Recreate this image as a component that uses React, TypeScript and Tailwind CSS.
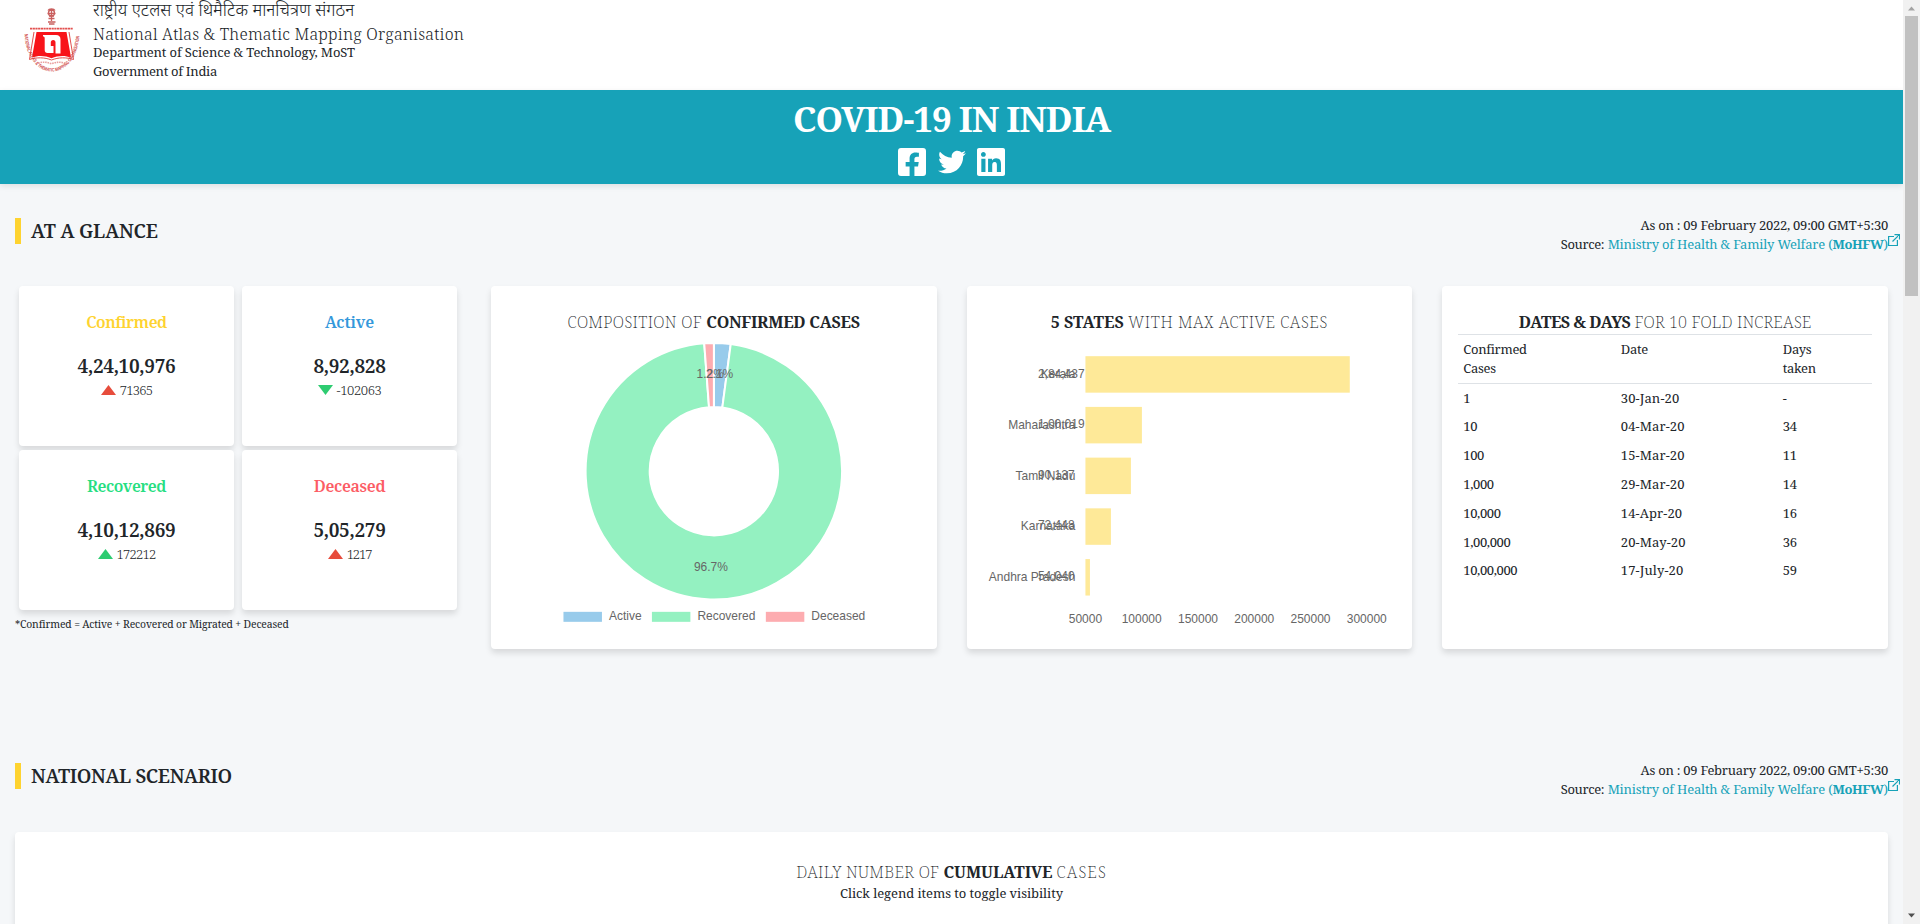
import type { ReactNode } from "react";
import { FaFacebookSquare, FaLinkedin, FaTwitter } from "react-icons/fa";

const YELLOW = "#fee998";
const BLUE = "#98cbeb";
const GREEN = "#94f1c1";
const PINK = "#fdacb0";

type Stat = { label: string; labelClass: string; total: string; delta: string; deltaClass: string; up: boolean; fill: string };

const stats: Stat[] = [
  { label: "Confirmed", labelClass: "text-[#fed330] tracking-[-0.49px]", total: "4,24,10,976", delta: "71365", deltaClass: "tracking-[-0.77px]", up: true, fill: "#e74c3c" },
  { label: "Active", labelClass: "text-[#3498db] tracking-[-0.12px]", total: "8,92,828", delta: "-102063", deltaClass: "tracking-[-0.38px]", up: false, fill: "#2ecc71" },
  { label: "Recovered", labelClass: "text-[#26de81] tracking-[-0.49px]", total: "4,10,12,869", delta: "172212", deltaClass: "tracking-[-0.77px]", up: true, fill: "#2ecc71" },
  { label: "Deceased", labelClass: "text-[#fc5c65] tracking-[-0.33px]", total: "5,05,279", delta: "1217", deltaClass: "tracking-[-1.1px]", up: true, fill: "#e74c3c" },
];

const states = [
  { name: "Kerala", value: "2,84,437", width: 264.5 },
  { name: "Maharashtra", value: "1,00,019", width: 56.5 },
  { name: "Tamil Nadu", value: "90,137", width: 45.5 },
  { name: "Karnataka", value: "72,448", width: 25.5 },
  { name: "Andhra Pradesh", value: "54,040", width: 4.5 },
];

const growth = [
  ["1", "30-Jan-20", "-"],
  ["10", "04-Mar-20", "34"],
  ["100", "15-Mar-20", "11"],
  ["1,000", "29-Mar-20", "14"],
  ["10,000", "14-Apr-20", "16"],
  ["1,00,000", "20-May-20", "36"],
  ["10,00,000", "17-July-20", "59"],
];

function Logo() {
  return (
    <svg className="mt-1 ml-[18px] h-[72px] w-[68px] shrink-0" viewBox="0 0 68 72">
      <g fill="none" stroke="#c9605f" strokeWidth="1.300">
        <path d="M30 6.500c1-2 6-2 7 0M29.500 9.500h8M31 12h5M30.500 14.500h6M33.500 5v12M30 18h7.500M31 20h5.500" />
        <circle cx="33.500" cy="9" r="3" />
      </g>
      <path d="M12 24.700h43" stroke="#e2504f" strokeWidth="1.800" strokeDasharray="2.200 .5" />
      <path d="M18.500 28h30l4.500 25.500c-6-2.200-13-2.200-19.500.8-6.500-3-13.500-3-19.500-.8z" fill="#f8141a" />
      <path d="M16 28l-4.500 27.500c7-2.300 15-2.300 22 .5 7-2.800 15-2.800 22-.5L51 28" fill="none" stroke="#e2504f" strokeWidth="1" />
      <path d="M25 31h13c3 0 4.500 1.500 4.500 4.500V49.500h-5V38.500c0-1.600-.8-2.500-2.300-2.500s-2.400 1-2.400 2.500v3.500h2.700v7h-6c-1.800 0-2.800-1-2.800-3V34.500c0-1.500-.5-2-1.700-2z" fill="#fff" />
      <path d="M20 59.200c5-1.600 9-1.200 13.500.6 4.500-1.800 8.500-2.200 13.500-.6" fill="none" stroke="#e9a0a0" strokeWidth="1.600" strokeDasharray="1.600 .8" />
      <path id="ring" d="M6.500 30C7 48 17 67.500 34 67.500S61 48 61.500 30" fill="none" />
      <text fontSize="4.900" fill="#cf4a4a" fontFamily="Liberation Sans, sans-serif" fontWeight="700">
        <textPath href="#ring" textLength="100" lengthAdjust="spacingAndGlyphs">NATIONAL ATLAS &amp; THEMATIC MAPPING ORGANISATION</textPath>
      </text>
    </svg>
  );
}

function ExternalIcon() {
  return (
    <svg className="-mr-3 inline-block h-3 w-3 -translate-y-[3px] align-baseline" viewBox="0 0 12 12" fill="none" stroke="#17a2b8" strokeWidth="1.200">
      <path d="M6 2.500H.6v9h8.800V6" />
      <path d="M6.500.6h5v5M11.200.8L4.500 7.500" />
    </svg>
  );
}

function SectionHeader({ title, className }: { title: string; className: string }) {
  return (
    <div className="flex h-[39px] items-start justify-between px-[15px]">
      <h2 className={`mt-[3px] flex h-[26px] items-center border-l-[6px] border-[#fed330] pl-[10px] text-[19px] leading-[26px] font-semibold ${className}`}>{title}</h2>
      <div className="pt-px text-right text-[13px] leading-[19px]">
        <div className="tracking-[-0.25px]">As on : 09 February 2022, 09:00 GMT+5:30</div>
        <div>
          <span className="tracking-[-0.36px]">Source:</span>{" "}
          <a className="text-[#17a2b8]">
            <span className="tracking-[-0.2px]">Ministry of Health &amp; Family Welfare (</span>
            <span className="font-bold tracking-[-0.39px]">MoHFW</span>)<ExternalIcon />
          </a>
        </div>
      </div>
    </div>
  );
}

function StatCard({ stat }: { stat: Stat }) {
  return (
    <div className="flex h-40 flex-col items-center rounded bg-white pt-[26px] shadow-[0_4px_6px_rgba(0,0,0,0.12)]">
      <div className={`text-[16px] leading-5 font-semibold ${stat.labelClass}`}>{stat.label}</div>
      <div className="mt-[22px] text-[19px] leading-6 font-semibold tracking-[-0.32px]">{stat.total}</div>
      <div className="mt-[2px] flex items-center gap-1 text-[13px] leading-5 font-light">
        <svg className="h-[10px] w-[15px]" viewBox="0 0 15 10" fill={stat.fill}>
          <path d={stat.up ? "M7.500 0L15 10H0z" : "M0 0h15L7.500 10z"} />
        </svg>
        <span className={stat.deltaClass}>{stat.delta}</span>
      </div>
    </div>
  );
}

function Card({ title, children }: { title: ReactNode; children: ReactNode }) {
  return (
    <div className="flex h-[363px] flex-col rounded bg-white px-4 pt-[26px] shadow-[0_4px_6px_rgba(0,0,0,0.12)]">
      <h3 className="text-center text-[16px] leading-5 font-extralight whitespace-nowrap">{title}</h3>
      {children}
    </div>
  );
}

function polar(r: number, turn: number) {
  const a = turn * 2 * Math.PI;
  return `${(207 + r * Math.sin(a)).toFixed(2)} ${(139.3 - r * Math.cos(a)).toFixed(2)}`;
}

function slice(from: number, to: number) {
  const large = to - from > 0.5 ? 1 : 0;
  return `M${polar(128.3, from)}A128.3 128.3 0 ${large} 1 ${polar(128.3, to)}L${polar(64.2, to)}A64.2 64.2 0 ${large} 0 ${polar(64.2, from)}Z`;
}

function DonutChart() {
  return (
    <svg className="h-[317px] w-full font-['Liberation_Sans',sans-serif] text-[12px]" viewBox="0 0 414 317" preserveAspectRatio="xMinYMin" fill="#666">
      <g stroke="#fff" strokeWidth="2">
        <path d={slice(0, 0.021)} fill={BLUE} />
        <path d={slice(0.021, 0.988)} fill={GREEN} />
        <path d={slice(0.988, 1)} fill={PINK} />
      </g>
      <text x="199" y="46">2.1%</text>
      <text x="189.700" y="46">1.2%</text>
      <text x="187" y="238.700">96.7%</text>
      <rect x="56.500" y="280" width="38.500" height="10" fill={BLUE} />
      <text x="102" y="288">Active</text>
      <rect x="145" y="280" width="38.500" height="10" fill={GREEN} />
      <text x="190.500" y="288">Recovered</text>
      <rect x="259" y="280" width="38.500" height="10" fill={PINK} />
      <text x="304.500" y="288">Deceased</text>
    </svg>
  );
}

function BarChart() {
  return (
    <svg className="h-[317px] w-full font-['Liberation_Sans',sans-serif] text-[12px]" viewBox="0 0 414 317" preserveAspectRatio="xMinYMin" fill="#666">
      {states.map((s, i) => (
        <g key={s.name}>
          <rect x="102.500" y={24.2 + i * 50.75} width={s.width} height="36.500" fill={YELLOW} />
          <text x="92.500" y={46.2 + i * 50.75} textAnchor="end">{s.name}</text>
          <text x="55" y={45.7 + i * 50.5}>{s.value}</text>
        </g>
      ))}
      {[50000, 100000, 150000, 200000, 250000, 300000].map((v, i) => (
        <text key={v} x={102.5 + i * 56.3} y="291" textAnchor="middle">{v}</text>
      ))}
    </svg>
  );
}

function GrowthTable() {
  return (
    <div className="mt-[2px] text-[13px] tracking-[-0.3px]">
      <div className="grid grid-cols-[157.5px_162px_1fr] border-y border-[#dee2e6] px-[5px] py-[5px] leading-[19px]">
        <div>Confirmed<br />Cases</div>
        <div>Date</div>
        <div>Days<br />taken</div>
      </div>
      {growth.map((row) => (
        <div key={row[0]} className="grid h-[28.8px] grid-cols-[157.5px_162px_1fr] items-center px-[5px]">
          <div className="tracking-[-0.38px]">{row[0]}</div>
          <div className="tracking-[0.12px]">{row[1]}</div>
          <div>{row[2]}</div>
        </div>
      ))}
    </div>
  );
}

export default function App() {
  return (
    <div className="flex h-[924px] w-full overflow-hidden bg-[#f5f7f9] font-['Noto_Serif','DejaVu_Serif',serif] text-[#212529]">
      <div className="min-w-0 flex-1">
        <header className="flex h-[90px] bg-white">
          <Logo />
          <div className="ml-[7px] flex flex-col whitespace-nowrap">
            <div className="h-[25px] font-['Noto_Sans_Devanagari','Noto_Sans',sans-serif] text-[17.25px] leading-[25px] font-light">राष्ट्रीय एटलस एवं थिमैटिक मानचित्रण संगठन</div>
            <div className="text-[16px] leading-[18px] font-light tracking-[0.23px]">National Atlas &amp; Thematic Mapping Organisation</div>
            <div className="text-[13px] leading-[19px] tracking-[-0.13px]">Department of Science &amp; Technology, MoST</div>
            <div className="text-[13px] leading-[19px] tracking-[-0.3px]">Government of India</div>
          </div>
        </header>
        <div className="flex h-[94px] flex-col items-center bg-[#17a2b8] pt-[7px] text-white shadow-[0_2px_6px_rgba(0,0,0,0.1)]">
          <h1 className="text-[35px] leading-[44px] font-bold tracking-[-1.04px]">COVID-19 IN INDIA</h1>
          <div className="mt-[5px] flex gap-[11.5px]">
            <FaFacebookSquare className="h-8 w-7" />
            <FaTwitter className="h-8 w-7" />
            <FaLinkedin className="h-8 w-7" />
          </div>
        </div>
        <div className="pt-[31px]">
          <SectionHeader title="AT A GLANCE" className="tracking-[-0.15px]" />
        </div>
        <div className="mt-8 grid grid-cols-4 gap-[30px] px-[15px]">
          <div>
            <div className="ml-1 grid grid-cols-[215px_215px] gap-x-2 gap-y-1">
              {stats.map((s) => <StatCard key={s.label} stat={s} />)}
            </div>
            <p className="mt-[6px] text-[10.4px] leading-4 tracking-[-0.15px]">*Confirmed = Active + Recovered or Migrated + Deceased</p>
          </div>
          <Card title={<><span className="tracking-[0.3px]">COMPOSITION OF</span> <b className="font-bold tracking-[-0.27px]">CONFIRMED CASES</b></>}>
            <DonutChart />
          </Card>
          <Card title={<><b className="font-bold">5 STATES</b> <span className="tracking-[0.52px]">WITH MAX ACTIVE CASES</span></>}>
            <BarChart />
          </Card>
          <Card title={<><b className="font-bold tracking-[-0.48px]">DATES &amp; DAYS</b> <span className="tracking-[0.14px]">FOR 10 FOLD INCREASE</span></>}>
            <GrowthTable />
          </Card>
        </div>
        <div className="mt-[111px]">
          <SectionHeader title="NATIONAL SCENARIO" className="tracking-[-0.35px]" />
        </div>
        <div className="mx-[15px] mt-[33px] h-[200px] rounded bg-white pt-[30px] text-center shadow-[0_4px_6px_rgba(0,0,0,0.12)]">
          <h3 className="text-[16px] leading-5 font-extralight"><span className="tracking-[0.26px]">DAILY NUMBER OF</span> <b className="font-bold tracking-[-0.09px]">CUMULATIVE</b> <span className="tracking-[1px]">CASES</span></h3>
          <p className="mt-px text-[13px] leading-5 tracking-[-0.06px]">Click legend items to toggle visibility</p>
        </div>
      </div>
      <div className="flex w-[17px] shrink-0 flex-col items-center justify-between bg-[#f1f1f1] py-[6px]">
        <svg className="h-[5px] w-[7px]" viewBox="0 0 7 5" fill="#a3a3a3"><path d="M0 4.500L3.500.5 7 4.500z" /></svg>
        <div className="mt-[5px] mb-auto h-[280px] w-[13px] bg-[#c1c1c1]" />
        <svg className="h-[5px] w-[7px]" viewBox="0 0 7 5" fill="#505050"><path d="M0 .5L3.500 4.500 7 .5z" /></svg>
      </div>
    </div>
  );
}
